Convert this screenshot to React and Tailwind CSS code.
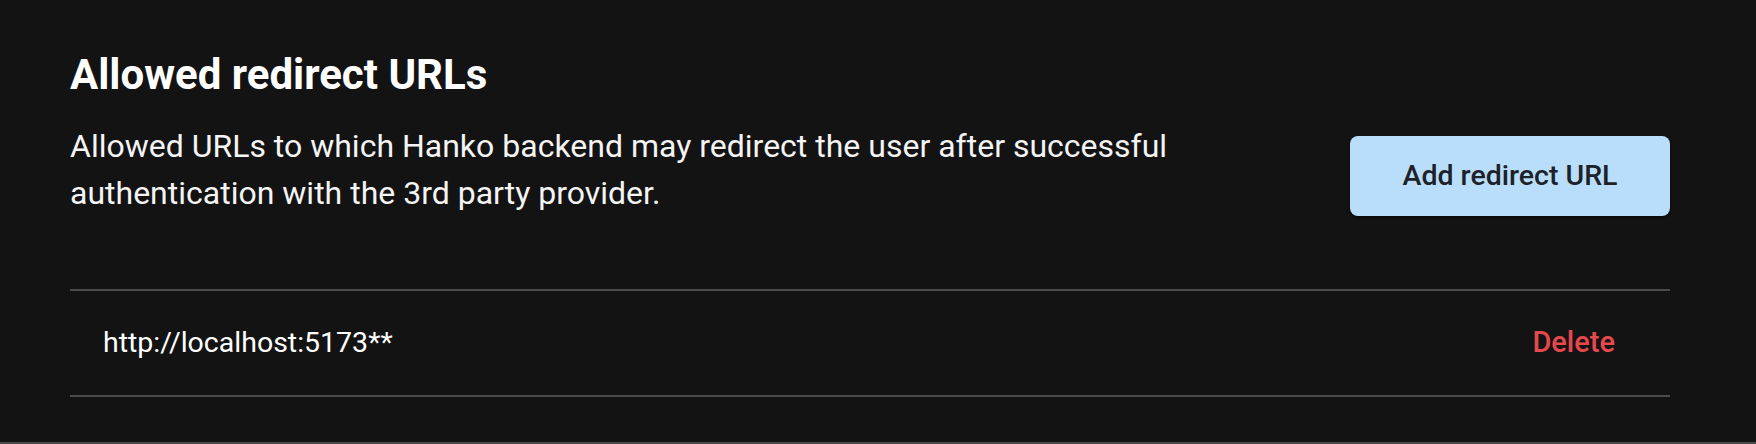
const redirectUrls = ['http://localhost:5173**']

export default function App() {
  return (
    <div className="h-[444px] w-full overflow-hidden bg-[#131313] border-b-2 border-[#4b4b4b] text-white" style={{ fontFamily: 'Roboto, "Noto Sans", sans-serif' }}>
      <div className="pl-[70px] pr-[86px] pt-[51px]">
        <div className="flex items-start justify-between">
          <div>
            <h2 className="text-[42px] leading-[48px] font-bold">Allowed redirect URLs</h2>
            <p className="mt-[24px] max-w-[1130px] text-[32px] leading-[47px] text-[#f4f4f4]">
              Allowed URLs to which Hanko backend may redirect the user after successful authentication with the 3rd party provider.
            </p>
          </div>
          <button className="mt-[85px] h-[80px] w-[320px] shrink-0 rounded-lg bg-[#b9defb] text-[28.5px] font-medium text-[#1d2228] shadow-[0_2px_3px_rgba(0,0,0,0.5)]">
            Add redirect URL
          </button>
        </div>

        <div className="mt-[72px] border-t-2 border-[#4b4b4b]">
          {redirectUrls.map((url) => (
            <div key={url} className="flex h-[106px] items-center justify-between border-b-2 border-[#4b4b4b] pl-[33px] pr-[55px]">
              <span className="text-[28.5px]">{url}</span>
              <button className="text-[29px] font-medium text-[#e5484d]">Delete</button>
            </div>
          ))}
        </div>
      </div>
    </div>
  )
}
